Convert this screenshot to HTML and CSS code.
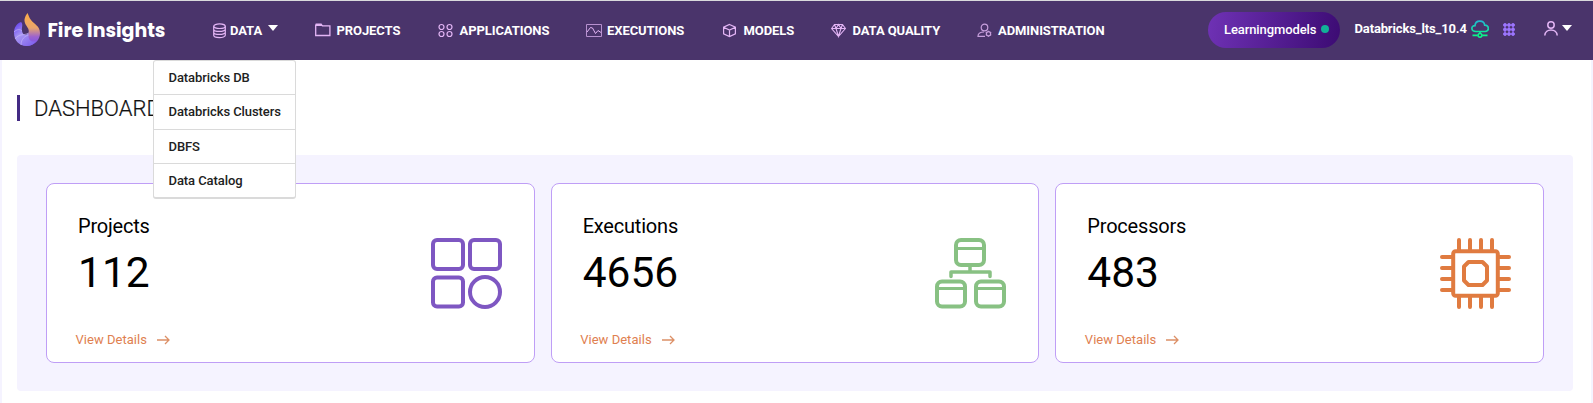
FILE: index.html
```html
<!DOCTYPE html>
<html lang="en">
<head>
<meta charset="utf-8">
<title>Fire Insights</title>
<link rel="stylesheet" href="styles.css">
</head>
<body>
<header class="topbar">
  <a class="brand">
    <svg class="brand-mark" width="28" height="36" viewBox="0 0 28 36">
      <defs>
        <linearGradient id="flame" x1="0" y1="0" x2="0" y2="1"><stop offset="0.1" stop-color="#f9ab4e"/><stop offset="0.45" stop-color="#e8a56c"/><stop offset="0.72" stop-color="#9c63cf"/><stop offset="1" stop-color="#7450f0"/></linearGradient>
        <linearGradient id="swirl" x1="0" y1="0" x2="0.7" y2="1"><stop offset="0" stop-color="#5a35ee"/><stop offset="0.5" stop-color="#a795f3"/><stop offset="1" stop-color="#8468ec"/></linearGradient>
      </defs>
      <path d="M14.500 1C11.500 5 11 8 12 11C13 14 17 17 15.500 21C15 25 10 27 7 31C10 34 14 34.500 17 33.500C23 32 27 27 27 21C27 14 21 12 18 8C16 5.500 15.500 3 14.500 1Z" fill="url(#flame)"/>
      <path d="M8 10C3 12 1 16 1 21C1 28 6 34 13.500 34C18 34 21 32 23 29C18 31 15 28 15.500 21C13 24 9.500 23 9 19C8.500 15 10.500 12 8 10Z" fill="url(#swirl)"/>
      <path d="M1 20C4 17 7 17 9 19M2 27C6 21 11 24 15.500 21M8 33C8 27 12 24 15.500 23" fill="none" stroke="#c9bdf9" stroke-width="1" opacity="0.6"/>
    </svg>
    <span class="brand-name">Fire Insights</span>
  </a>
  <nav class="nav">
    <a class="nav-item nav-data">
      <svg width="14" height="16" viewBox="0 0 14 16"><g fill="none" stroke="#e3b5f5" stroke-width="1.200"><ellipse cx="6.500" cy="3.200" rx="5.800" ry="2.300"/><path d="M.7 3.200V12.300C.7 15.300 12.300 15.300 12.300 12.300V3.200M.7 6.200C.7 9.200 12.300 9.200 12.300 6.200M.7 9.200C.7 12.200 12.300 12.200 12.300 9.200"/></g></svg>
      <span>DATA</span>
      <svg class="caret" width="10" height="6" viewBox="0 0 10 6"><path d="M0 0H10L5 6Z" fill="#fff"/></svg>
    </a>
    <a class="nav-item">
      <svg width="16" height="16" viewBox="0 0 16 16"><path d="M.7 2.100H6.500L7.500 2.800H14.900V12.500H.7Z" fill="none" stroke="#e3b5f5" stroke-width="1.300"/><path d="M.6 .5H6.500L8 3H.6Z" fill="#e3b5f5"/></svg>
      <span>PROJECTS</span>
    </a>
    <a class="nav-item">
      <svg width="16" height="16" viewBox="0 0 16 16"><g fill="none" stroke="#e3b5f5" stroke-width="1.200"><circle cx="3.500" cy="4" r="2.500"/><circle cx="11.500" cy="4" r="2.500"/><circle cx="3.500" cy="11" r="2.500"/><circle cx="11.500" cy="11" r="2.500"/></g></svg>
      <span>APPLICATIONS</span>
    </a>
    <a class="nav-item nav-exec">
      <svg width="16" height="16" viewBox="0 0 16 16"><g fill="none" stroke="#b790cf" stroke-width="1"><path d="M.5 1.500H15.500V13.500H.5Z"/><path d="M1 9L4.500 4.500L6.500 5L9.500 10.500L12 7.500L15 9.500" stroke="#e3b5f5"/></g></svg>
      <span>EXECUTIONS</span>
    </a>
    <a class="nav-item">
      <svg width="16" height="16" viewBox="0 0 16 16"><path d="M7.500 1.500L13.400 4.100V10.900L7.500 13.600L1.600 10.900V4.100ZM1.600 4.300L7.500 7.100L13.400 4.300M7.500 7.100V13.500" fill="none" stroke="#e3b5f5" stroke-width="1.200"/></svg>
      <span>MODELS</span>
    </a>
    <a class="nav-item">
      <svg width="16" height="16" viewBox="0 0 16 16"><path d="M3.500 1.500H11.500L14.400 5.500L7.500 13.500L.6 5.500ZM.6 5.500H14.400M3.500 1.500L5 5.500L7.500 13.500L10 5.500L11.500 1.500M5 5.500L7.500 1.500L10 5.500" fill="none" stroke="#e3b5f5" stroke-width="1.100"/></svg>
      <span>DATA QUALITY</span>
    </a>
    <a class="nav-item nav-exec">
      <svg width="16" height="16" viewBox="0 0 16 16"><g fill="none" stroke="#c79fdd" stroke-width="1.200"><circle cx="7.500" cy="4.500" r="3.300"/><path d="M8 13.300H1C1 10.500 3.500 9 7 9"/><circle cx="11.500" cy="10.700" r="2.100"/><path d="M11.500 7.700V8.500M11.500 12.900V13.700M8.800 9.200L9.700 9.700M13.300 11.700L14.200 12.200M14.200 9.200L13.300 9.700M9.700 11.700L8.800 12.200"/></g></svg>
      <span>ADMINISTRATION</span>
    </a>
  </nav>
  <div class="tools">
    <span class="pill">Learningmodels<i class="dot"></i></span>
    <span class="cluster">Databricks_lts_10.4</span>
    <svg class="cloud" width="18" height="18" viewBox="0 0 18 18"><defs><linearGradient id="cg" gradientUnits="userSpaceOnUse" x1="0" y1="1" x2="0" y2="15"><stop offset="0" stop-color="#22b8d0"/><stop offset="1" stop-color="#0bf58c"/></linearGradient></defs><path d="M5 11.500C-.3 11.500-.3 5.600 4 5.600C4.500-.2 13-.2 13.700 5.200C18.500 5 18.500 11.500 14 11.500ZM9 11.500V14M1.500 15.300H6.800M11.200 15.300H16.500" fill="none" stroke="url(#cg)" stroke-width="1.700"/><circle cx="9" cy="15.300" r="1.900" fill="none" stroke="#0bf58c" stroke-width="1.500"/></svg>
    <svg class="apps" width="12" height="13" viewBox="0 0 12 13"><path d="M2 0V13M6 0V13M10 0V13M0 2H12M0 6.500H12M0 11H12" stroke="#7d55cf" stroke-width="2"/><g fill="#9c78fb"><circle cx="2" cy="2" r="1.800"/><circle cx="6" cy="2" r="1.800"/><circle cx="10" cy="2" r="1.800"/><circle cx="2" cy="6.500" r="1.800"/><circle cx="6" cy="6.500" r="1.800"/><circle cx="10" cy="6.500" r="1.800"/><circle cx="2" cy="11" r="1.800"/><circle cx="6" cy="11" r="1.800"/><circle cx="10" cy="11" r="1.800"/></g></svg>
    <svg class="user" width="14" height="15" viewBox="0 0 14 15"><g fill="none" stroke="#e3b5f5" stroke-width="1.500"><circle cx="7" cy="4" r="3.200"/><path d="M.8 14.500C1 7 13 7 13.200 14.500"/></g></svg>
    <svg class="user-caret" width="10" height="6" viewBox="0 0 10 6"><path d="M0 0H10L5 6Z" fill="#fff"/></svg>
  </div>
  <ul class="menu">
    <li>Databricks DB</li>
    <li>Databricks Clusters</li>
    <li>DBFS</li>
    <li>Data Catalog</li>
  </ul>
</header>
<main class="page">
  <h1 class="title">DASHBOARD</h1>
  <section class="panel">
    <article class="card">
      <div class="card-text"><h2>Projects</h2><p class="count">112</p><a class="details">View Details <svg width="13" height="10" viewBox="0 0 13 10"><path d="M0 5H12M8 1L12 5L8 9" fill="none" stroke="#dc9067" stroke-width="1.300"/></svg></a></div>
      <svg class="card-icon" width="72" height="72" viewBox="0 0 72 72"><g fill="none" stroke="#7e57c2" stroke-width="4"><rect x="2" y="2" width="30" height="29" rx="4"/><rect x="39" y="2" width="30" height="29" rx="4"/><rect x="2" y="39.500" width="30" height="29" rx="4"/><circle cx="54" cy="54" r="15"/></g></svg>
    </article>
    <article class="card">
      <div class="card-text"><h2>Executions</h2><p class="count">4656</p><a class="details">View Details <svg width="13" height="10" viewBox="0 0 13 10"><path d="M0 5H12M8 1L12 5L8 9" fill="none" stroke="#dc9067" stroke-width="1.300"/></svg></a></div>
      <svg class="card-icon" width="72" height="72" viewBox="0 0 72 72"><g fill="none" stroke="#88c183" stroke-width="4"><rect x="21" y="2" width="28" height="25" rx="5"/><rect x="2" y="43.500" width="28" height="25" rx="5"/><rect x="41" y="43.500" width="28" height="25" rx="5"/><path d="M21 10.500H49M2 50.500H30M41 50.500H69" stroke-width="3.200"/><path d="M35 28V34M16 38.500V34H55V38.500" stroke-width="3.500" stroke-linecap="round" stroke-linejoin="round"/></g></svg>
    </article>
    <article class="card">
      <div class="card-text"><h2>Processors</h2><p class="count">483</p><a class="details">View Details <svg width="13" height="10" viewBox="0 0 13 10"><path d="M0 5H12M8 1L12 5L8 9" fill="none" stroke="#dc9067" stroke-width="1.300"/></svg></a></div>
      <svg class="card-icon" width="72" height="72" viewBox="0 0 72 72"><g fill="none" stroke="#e07b40" stroke-width="4" stroke-linecap="round"><rect x="13.200" y="13.200" width="44.600" height="44.600" rx="2.500"/><path d="M19 2V12M30 2V12M41 2V12M52 2V12M19 59V69M30 59V69M41 59V69M52 59V69M2 19H12M2 30H12M2 41H12M2 52H12M59 19H69M59 30H69M59 41H69M59 52H69"/><path d="M28.500 24H42.500L47 28.500V42.500L42.500 47H28.500L24 42.500V28.500Z" stroke-linejoin="round"/></g></svg>
    </article>
  </section>
</main>
</body>
</html>
```
FILE: styles.css
```css
* { box-sizing: border-box; }
body {
  margin: 0;
  min-height: 403px;
  display: flex;
  flex-direction: column;
  font-family: Roboto, sans-serif;
  color: #000;
  background: #fff;
  overflow: hidden;
}
svg { display: block; flex: none; }
.topbar {
  position: relative;
  display: flex;
  height: 60px;
  border-top: 1px solid #d9d9dc;
  background: #4a346b;
  color: #fff;
}
.brand { display: flex; width: 213px; padding: 11px 0 0 13px; flex: none; }
.brand-name {
  margin: 1px 0 0 6.500px;
  font: 700 19px/36px "Poppins", "Open Sans", sans-serif;
  letter-spacing: -0.05px;
  white-space: nowrap;
}
.nav {
  display: grid;
  grid-template-columns: 102px 123px 148px 136px 109px 146px 231px;
  flex: none;
  font-size: 13px;
  font-weight: 700;
  line-height: 16px;
  letter-spacing: -0.08px;
  padding-top: 22px;
}
.nav-item { display: flex; gap: 5.500px; height: 16px; white-space: nowrap; }
.nav-data { gap: 3px; }
.nav-exec { gap: 5px; }
.caret { margin: 2px 0 0 3px; }
.tools { display: flex; flex: 1; font-size: 13px; font-weight: 700; white-space: nowrap; }
.pill {
  display: flex;
  align-items: center;
  width: 132px;
  height: 36px;
  margin-top: 11px;
  padding: 0 11px 2px 16px;
  justify-content: space-between;
  border-radius: 18px;
  background: linear-gradient(100deg, #6f32b5, #3c0b73);
  font-weight: 500;
  letter-spacing: -0.1px;
  flex: none;
}
.dot { width: 8px; height: 8px; border-radius: 50%; background: #12b098; }
.cluster { width: 113px; margin: 20px 0 0 14.500px; line-height: 16px; letter-spacing: -0.14px; flex: none; }
.cloud { margin: 19px 0 0 3.500px; }
.apps { margin: 22px 0 0 14px; }
.user { margin: 20px 0 0 29px; }
.user-caret { margin: 24px 0 0 4px; }
.menu {
  position: absolute;
  left: 153px;
  top: 59px;
  z-index: 2;
  width: 143px;
  height: 139px;
  margin: 0;
  padding: 0;
  list-style: none;
  background: #fff;
  border: 1px solid #dadada;
  border-bottom-width: 2px;
  border-radius: 3px;
  color: #212121;
  font-size: 13px;
  font-weight: 500;
  letter-spacing: -0.08px;
}
.menu li { height: 34.300px; padding-left: 14.500px; line-height: 34px; border-bottom: 1px solid #dadada; white-space: nowrap; }
.menu li:last-child { border-bottom: 0; }
.page { flex: 1; padding: 35px 18px 0 15px; border: solid #f5f3ff; border-width: 0 2px; }
.title {
  height: 26px;
  margin: 0;
  padding-left: 14px;
  border-left: 3px solid #432a84;
  font-size: 22px;
  font-weight: 300;
  line-height: 27px;
  -webkit-text-stroke: 0.200px #111;
  color: #111;
}
.panel {
  display: grid;
  grid-template-columns: repeat(3, 1fr);
  gap: 16px;
  height: 236px;
  margin-top: 34px;
  padding: 28px 29px;
  border-radius: 4px;
  background: #f5f3ff;
}
.card {
  display: flex;
  justify-content: space-between;
  padding: 0 31px 0 28px;
  border: 1px solid #bf9ef6;
  border-radius: 8px;
  background: #fff;
}
.card-text { display: flex; flex-direction: column; }
.card h2 { margin: 30px 0 0 3px; font-size: 20px; font-weight: 400; line-height: 24px; letter-spacing: -0.2px; }
.count { margin: 10px 0 0 3px; font-size: 42.500px; line-height: 50px; }
.details { display: flex; align-items: center; gap: 10px; margin: 33px 0 0 0.500px; font-size: 13px; line-height: 18px; letter-spacing: 0.03px; color: #e08050; }
.card-icon { margin-top: 54px; }
```
